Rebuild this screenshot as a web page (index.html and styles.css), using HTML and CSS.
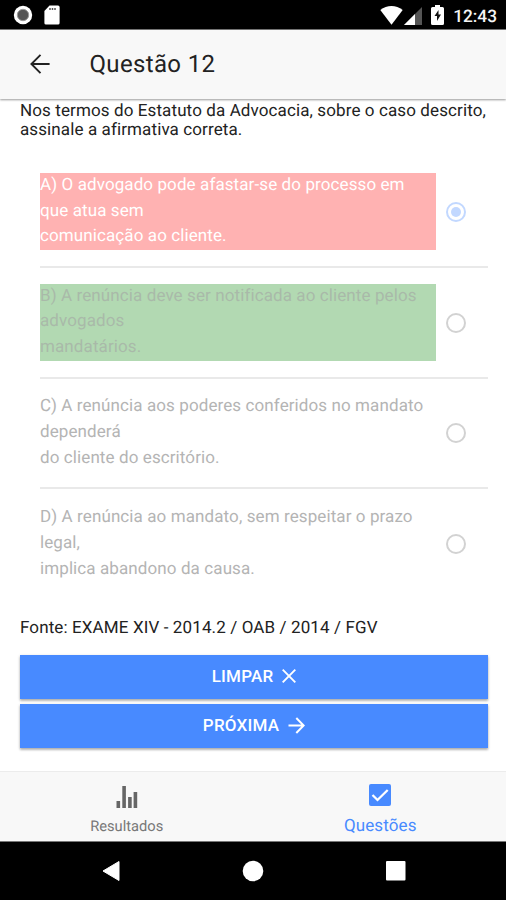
FILE: index.html
```html
<!DOCTYPE html>
<html lang="pt-BR">
<head>
<meta charset="utf-8">
<title>Questão 12</title>
<link rel="stylesheet" href="styles.css">
</head>
<body>
<div class="phone">
  <div class="status">
    <div class="status-left">
      <svg width="20" height="20" viewBox="0 0 20 20"><circle cx="10" cy="10" r="9.2" fill="#fff"/><circle cx="10" cy="10" r="5.7" fill="#555" stroke="#999" stroke-width="1"/></svg>
      <svg width="16" height="20" viewBox="0 0 16 20"><path d="M5.5.5H14a1.6 1.6 0 0 1 1.6 1.6v15.800a1.600 1.600 0 0 1-1.600 1.600H2A1.600 1.600 0 0 1 .4 17.900V6z" fill="#fff"/><path d="M6 3v2M8.500 3v2M11 3v2" stroke="#555" stroke-width="1.500"/></svg>
    </div>
    <div class="status-right">
      <svg class="wifi" width="23" height="19" viewBox="0 0 23 19"><path d="M.3 4C7-1.200 16-1.200 22.700 4L11.500 18.800z" fill="#fff"/></svg>
      <svg class="signal" width="18" height="18" viewBox="0 0 18 18"><path d="M18 0v18H0z" fill="#555"/><path d="M11 7v11H0z" fill="#fff"/></svg>
      <svg class="battery" width="13" height="20" viewBox="0 0 13 20"><path d="M4 0h5v2h2.500A1.500 1.500 0 0 1 13 3.500v15a1.500 1.500 0 0 1-1.500 1.500h-10A1.500 1.500 0 0 1 0 18.500v-15A1.500 1.500 0 0 1 1.500 2H4z" fill="#fff"/><path d="M7.500 5L3.500 11h2.500v5l4-6.500H7.500z" fill="#111"/></svg>
      <span class="clock">12:43</span>
    </div>
  </div>
  <header class="header">
    <svg width="20" height="20" viewBox="0 0 20 20" fill="none" stroke="#222" stroke-width="1.900"><path d="M19.600 10H1.500M10.500 .8L1.400 10l9.100 9.200"/></svg>
    <h1>Questão 12</h1>
  </header>
  <main class="content">
    <p class="prompt">Nos termos do Estatuto da Advocacia, sobre o caso descrito,<br>assinale a afirmativa correta.</p>
    <ul class="options">
      <li class="option">
        <div class="label wrong">A) O advogado pode afastar-se do processo em<br>que atua sem<br>comunicação ao cliente.</div>
        <span class="radio checked"></span>
      </li>
      <li class="option">
        <div class="label right">B) A renúncia deve ser notificada ao cliente pelos<br>advogados<br>mandatários.</div>
        <span class="radio"></span>
      </li>
      <li class="option">
        <div class="label">C) A renúncia aos poderes conferidos no mandato<br>dependerá<br>do cliente do escritório.</div>
        <span class="radio"></span>
      </li>
      <li class="option">
        <div class="label">D) A renúncia ao mandato, sem respeitar o prazo<br>legal,<br>implica abandono da causa.</div>
        <span class="radio"></span>
      </li>
    </ul>
    <p class="source">Fonte: EXAME XIV - 2014.2 / OAB / 2014 / FGV</p>
    <button class="btn">LIMPAR <svg width="14" height="14" viewBox="0 0 14 14" fill="none" stroke="#fff" stroke-width="1.900"><path d="M.7.700l12.600 12.600M13.300.700L.7 13.300"/></svg></button>
    <button class="btn">PRÓXIMA <svg width="17" height="17" viewBox="0 0 17 17" fill="none" stroke="#fff" stroke-width="2"><path d="M.5 8.500h15M8.300 1l7.400 7.500L8.300 16"/></svg></button>
  </main>
  <nav class="tabs">
    <a class="tab">
      <svg width="22" height="24" viewBox="0 0 22 24" fill="#666"><path d="M.5 17h3.600v7H.5zM6.300 2h3.600v22H6.300zM12.100 13h3.600v11h-3.600zM17.600 8h3.600v16h-3.600z"/></svg>
      <span>Resultados</span>
    </a>
    <a class="tab active">
      <svg width="22" height="24" viewBox="0 0 22 24"><rect y="1" width="22" height="22" rx="2" fill="#488aff"/><path d="M3.500 12l5 5L18.700 7" fill="none" stroke="#fff" stroke-width="2.300"/></svg>
      <span>Questões</span>
    </a>
  </nav>
  <div class="sysnav">
    <svg width="18" height="22" viewBox="0 0 18 22"><path d="M17 1.500v19L1 11z" fill="#fff" stroke="#fff" stroke-linejoin="round"/></svg>
    <svg width="22" height="22" viewBox="0 0 22 22"><circle cx="11" cy="11" r="10.300" fill="#fff"/></svg>
    <svg width="20" height="20" viewBox="0 0 20 20"><rect width="19.500" height="19.500" rx="1" fill="#fff"/></svg>
  </div>
</div>
</body>
</html>
```
FILE: styles.css
```css
* { box-sizing: border-box; }
body { margin: 0; font-family: Roboto, "Liberation Sans", sans-serif; color: #000; text-rendering: geometricPrecision; }
.phone { width: 506px; height: 900px; display: flex; flex-direction: column; overflow: hidden; background: #fff; }
svg { display: block; flex: none; }
h1, p, ul { margin: 0; padding: 0; }

.status { height: 30px; flex: none; background: #000; border-bottom: 1px solid #777; display: flex; justify-content: space-between; padding: 0 9px 0 13px; }
.status-left, .status-right { display: flex; align-items: center; padding-top: 1px; }
.status-left { gap: 11px; }
.signal { margin: 1px 9px 0 1px; }
.battery { margin-right: 9px; }
.clock { color: #f4f4f4; font-size: 17.3px; font-weight: 500; line-height: 20px; padding-top: 3px; }

.header { height: 69px; flex: none; position: relative; z-index: 1; background: #f8f8f8; display: flex; align-items: center; gap: 39.5px; padding: 0 0 1px 30px; box-shadow: 0 1px 2px rgba(0, 0, 0, .4); }
.header h1 { font-size: 24px; font-weight: 400; line-height: 30px; color: #222; letter-spacing: .35px; }

.content { flex: 1; padding: 3px 18px 0 20px; }
.prompt { font-size: 17px; line-height: 19px; color: #222; white-space: nowrap; letter-spacing: .11px; }

.options { list-style: none; padding-left: 20px; margin-top: 17px; }
.option { height: 110.8px; display: flex; align-items: center; border-bottom: 2px solid #e9e9e9; }
.option:last-child { border-bottom-color: transparent; }
.label { width: 396px; height: 77px; font-size: 17px; letter-spacing: .1px; line-height: 25.8px; color: #b4b4b4; white-space: nowrap; }
.wrong { background: #ffb2b2; color: #fff; }
.right { background: #b2d9b2; color: #a9b9a9; }
.radio { width: 20px; height: 20px; margin: 1px 0 0 9.5px; border: 2px solid #d2d2d2; border-radius: 50%; }
.checked { border-color: #c2d8ff; padding: 3px; }
.checked::before { content: ""; display: block; width: 10px; height: 10px; border-radius: 50%; background: #c2d8ff; }

.source { font-size: 17px; letter-spacing: .12px; line-height: 20px; color: #222; margin: 18px 0 16.8px; white-space: nowrap; }
.btn { display: flex; align-items: center; justify-content: center; gap: 9px; width: 100%; height: 44px; margin: 0 0 5px; padding: 0 0 1px; border: 0; background: #488aff; color: #fff; font-family: inherit; font-size: 17px; letter-spacing: .2px; font-weight: 500; box-shadow: 0 2px 2px rgba(0, 0, 0, .2), 0 1px 3px rgba(0, 0, 0, .2); }

.tabs { height: 71px; flex: none; display: flex; background: #f8f8f8; border-top: 1px solid #ececec; border-bottom: 1px solid #777; }
.tab { flex: 1; display: flex; flex-direction: column; align-items: center; padding: 12px 0 0 1px; color: #777; font-size: 14.7px; }
.tab span { line-height: 20px; margin-top: 8px; }
.active { color: #488aff; font-size: 17px; letter-spacing: .12px; padding: 11px 0 0 2px; }
.active span { margin-top: 9px; }
.sysnav { height: 58px; flex: none; background: #000; display: flex; align-items: center; justify-content: space-between; padding: 0 100px 0 102px; }
```
